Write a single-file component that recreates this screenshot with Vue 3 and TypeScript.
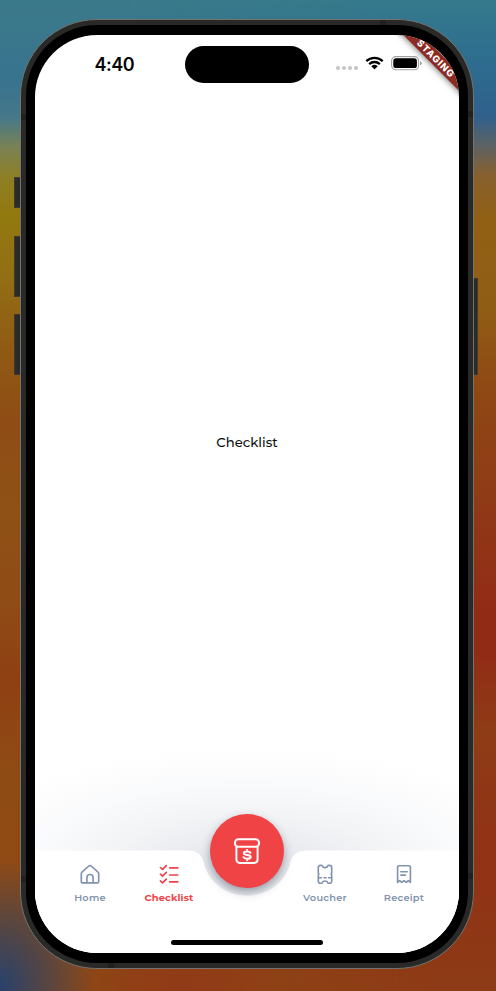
<script setup lang="ts">
interface Tab {
  id: string
  label: string
  paths: string[]
}

const leftTabs: Tab[] = [
  {
    id: 'home',
    label: 'Home',
    paths: ['M2 8.1 8.8 2Q10 1 11.2 2L18 8.1Q18.700 8.700 18.700 9.800V17.700Q18.700 18.900 17.500 18.900H2.500Q1.300 18.900 1.300 17.700V9.800Q1.300 8.700 2 8.100Z', 'M6.9 18.8V13.6A3.1 3.1 0 0 1 13.1 13.6V18.8'],
  },
  {
    id: 'checklist',
    label: 'Checklist',
    paths: ['M1.4 3.5 3.6 5.4 7.3 1.7', 'M1.4 10.2 3.6 12.1 7.3 8.4', 'M1.4 16.9 3.6 18.8 7.3 15.1', 'M10.6 3.8H18.8', 'M10.6 11H18.8', 'M10.6 17.9H18.8'],
  },
]

const rightTabs: Tab[] = [
  {
    id: 'voucher',
    label: 'Voucher',
    paths: ['M7.3 2C8 4.200 12 4.200 12.700 2Q13 1.300 13.800 1.300H14.500Q16.700 1.300 16.700 3.500V9.300Q15.700 10.300 16.700 11.300V17.200Q16.700 19.300 14.500 19.300H13.800Q13 19.300 12.700 18.600C12 16.400 8 16.400 7.300 18.600Q7 19.300 6.200 19.300H5.500Q3.300 19.300 3.300 17.200V11.300Q4.300 10.300 3.300 9.300V3.500Q3.300 1.300 5.500 1.300H6.200Q7 1.300 7.300 2Z', 'M4 13.7H6.4', 'M9 13.7H11', 'M13.600 13.700H16'],
  },
  {
    id: 'receipt',
    label: 'Receipt',
    paths: ['M3.6 18.4V3.1Q3.6 1.7 5 1.7H15Q16.4 1.7 16.4 3.1V18.4L14.3 16.7 12.2 18.4 10 16.7 7.8 18.4 5.7 16.7Z', 'M6.8 7.7H13.2', 'M6.8 11.1H11.4'],
  },
]

const activeTab = 'checklist'
const sideKeys = ['mute', 'up', 'down', 'power']
const seams = ['tl', 'tr', 'bl', 'br', 'top', 'bottom']
</script>

<template>
  <div class="desktop">
    <div class="phone">
      <i v-for="k in sideKeys" :key="k" class="key" :class="k" />
      <i v-for="s in seams" :key="s" class="seam" :class="s" />
      <div class="bezel">
        <div class="screen">
          <header class="status">
            <time class="clock">4:40</time>
            <div class="island" />
            <div class="indicators">
              <svg class="cell" viewBox="0 0 22 4">
                <circle v-for="n in 4" :key="n" :cx="n * 6 - 4" cy="2" r="2" />
              </svg>
              <svg class="wifi" viewBox="0 0 20 14">
                <path d="M1.4 5.1A12.4 12.4 0 0 1 18.6 5.1M4.4 8.2A8.1 8.1 0 0 1 15.6 8.2" />
                <path class="dot" d="M6.6 10.3Q10 7.3 13.4 10.3L10.5 13.2Q10 13.7 9.5 13.2Z" />
              </svg>
              <svg class="battery" viewBox="0 0 31 15">
                <rect class="shell" x=".6" y=".6" width="27" height="13.2" rx="4.2" />
                <rect x="2.3" y="2.3" width="23.6" height="9.8" rx="2.7" />
                <path class="tip" d="M29 5.2Q30.8 5.8 30.8 7.2T29 9.3Z" />
              </svg>
            </div>
          </header>

          <main class="content">Checklist</main>

          <div class="ribbon"><span>STAGING</span></div>

          <footer class="dock">
            <svg class="surface" viewBox="0 0 424 103">
              <path d="M0 -.5H152Q167 -.5 169 13C174 31 191 44.500 212 44.500S250 31 255 13Q257 -.5 272 -.5H424V103H0Z" />
            </svg>
            <nav class="tabs">
              <a v-for="t in leftTabs" :key="t.id" class="tab" :class="[t.id, { active: t.id === activeTab }]">
                <svg viewBox="0 0 20 20"><path v-for="d in t.paths" :key="d" :d="d" /></svg>
                <span>{{ t.label }}</span>
              </a>
              <span class="gap" />
              <a v-for="t in rightTabs" :key="t.id" class="tab" :class="[t.id, { active: t.id === activeTab }]">
                <svg viewBox="0 0 20 20"><path v-for="d in t.paths" :key="d" :d="d" /></svg>
                <span>{{ t.label }}</span>
              </a>
            </nav>
            <button class="fab" aria-label="Payments">
              <svg viewBox="0 0 26 26">
                <rect x="1" y="1.200" width="24" height="7.600" rx="3.400" />
                <path d="M2.400 8.800V21.300Q2.400 24.900 6 24.900H20Q23.600 24.900 23.600 21.300V8.800" />
                <path d="M16.500 14.700Q15.800 13.500 13.200 13.500 9.800 13.500 9.800 15.300C9.800 18 16.700 16 16.700 18.900Q16.700 20.700 13.200 20.700 10.200 20.700 9.500 19.200M13.100 11.900V13.500M13.100 20.700V22.300" />
              </svg>
            </button>
            <div class="grabber" />
          </footer>
        </div>
      </div>
    </div>
  </div>
</template>

<style>
body {
  margin: 0;
  overflow: hidden;
}
</style>

<style scoped>
* {
  box-sizing: border-box;
}
.desktop {
  position: relative;
  isolation: isolate;
  width: 496px;
  height: 991px;
  padding: 19px 22px 22px 20px;
  overflow: hidden;
  background:
    radial-gradient(ellipse 96px 125px at 0 985px, #29426c 0, #30436099 48%, #8f4a1600 100%),
    linear-gradient(180deg, #3b7a8a 0, #38738f 82px, #477889 118px, #7b8252 148px, #8e7f25 178px, #92790f 215px, #927014 270px, #905a14 350px, #8f4d15 420px, #8f5116 510px, #8f4c15 600px, #8f4014 680px, #8f4b14 770px, #8f4815 991px);
}
.desktop::before {
  content: '';
  position: absolute;
  z-index: -1;
  inset: 0;
  background: linear-gradient(180deg, #347a8c 0, #2e6c8f 65px, #2f608c 116px, #5c6265 145px, #87602f 175px, #916014 220px, #905d15 310px, #8f4914 385px, #8f3d16 480px, #922b16 610px, #912b16 650px, #8e3c16 730px, #913215 860px, #8d3b16 991px);
  -webkit-mask-image: linear-gradient(90deg, transparent 80px, #000 440px);
  mask-image: linear-gradient(90deg, transparent 80px, #000 440px);
}
.desktop::after {
  content: '';
  position: absolute;
  z-index: -1;
  inset: 920px 0 0;
  background: radial-gradient(ellipse 100px 70px at 180px 65px, #94321899 0, #94321800 100%);
}
.phone {
  position: relative;
  width: 454px;
  height: 950px;
  padding: 5px;
  border: 1px solid #72736f;
  border-radius: 77px;
  background: #292a28;
}
.bezel {
  height: 100%;
  padding: 10px 9px;
  border-radius: 71px;
  background: #000;
}
.screen {
  position: relative;
  display: flex;
  flex-direction: column;
  height: 918px;
  border-radius: 62px;
  background: #fff;
  overflow: hidden;
}
.key {
  position: absolute;
  left: -7px;
  width: 6px;
  border: 1px solid #41392b;
  border-right: 0;
  background: #2b2c2a;
}
.mute { top: 157px; height: 31px; }
.up { top: 216px; height: 61px; }
.down { top: 294px; height: 61px; }
.power {
  top: 258px;
  left: 453px;
  width: 4px;
  height: 97px;
  border: 1px solid #41392b;
  border-left: 0;
}
.seam {
  position: absolute;
  width: 5px;
  height: 6px;
  background: #20211f;
}
.tl { top: 94px; left: 0; }
.tr { top: 91px; right: 0; }
.bl { top: 856px; left: 0; }
.br { top: 853px; right: 0; }
.top { top: 0; left: 359px; width: 6px; height: 5px; }
.bottom { bottom: 0; left: 87px; width: 6px; height: 5px; }

.status {
  display: grid;
  grid-template-columns: 150px 124px 150px;
  flex: none;
  height: 59px;
}
.clock {
  padding: 19px 0 0 59.500px;
  font: 600 18px/22px Inter, sans-serif;
  letter-spacing: -0.450px;
  color: #050505;
}
.island {
  height: 36.500px;
  margin-top: 11px;
  border-radius: 19px;
  background: #000;
}
.indicators {
  display: flex;
  align-items: flex-start;
  padding: 21px 0 0 27px;
}
.cell {
  width: 22px;
  height: 4px;
  margin: 10px 7px 0 0;
  fill: #c5c5c7;
}
.wifi {
  width: 19px;
  height: 14px;
  margin-right: 7px;
  fill: none;
  stroke: #000;
  stroke-width: 2.400;
}
.wifi .dot {
  fill: #000;
  stroke: none;
}
.battery {
  width: 31px;
  height: 15px;
}
.shell {
  fill: none;
  stroke: #a2a2a2;
  stroke-width: 1.100;
}
.tip { fill: #a2a2a2; }

.content {
  display: flex;
  flex: 1;
  align-items: center;
  justify-content: center;
  padding-bottom: 106px;
  margin-bottom: -45px;
  font: 500 13.200px/18px Montserrat, Inter, sans-serif;
  letter-spacing: 0;
  color: #101010;
}
.ribbon {
  position: absolute;
  top: 17px;
  right: -42px;
  width: 130px;
  height: 13px;
  background: #8d2b23;
  box-shadow: 0 0 7px #000a;
  transform: rotate(45deg);
  font: 800 9.400px/13px Inter, sans-serif;
  letter-spacing: 0.950px;
  text-align: center;
  color: #fff;
}
.dock {
  position: relative;
  flex: none;
  height: 102px;
}
.dock::before {
  content: '';
  position: absolute;
  top: -115px;
  left: 0;
  width: 424px;
  height: 165px;
  background: radial-gradient(ellipse 310px 122px at 212px 132px, #e0e3e8 0, #e9ebef 22%, #f2f4f6 45%, #f9fafb 68%, #fdfdfe 85%, #fff 100%);
}
.surface {
  position: absolute;
  inset: 0;
  width: 424px;
  height: 103px;
  fill: #fff;
  overflow: visible;
}
.tabs {
  position: relative;
  display: grid;
  grid-template-columns: 78px 80px 76px 80px 78px;
  padding: 13px 0 0 16px;
}
.tab {
  display: flex;
  flex-direction: column;
  align-items: center;
  gap: 7px;
  font: 600 9.800px/13px Montserrat, Inter, sans-serif;
  letter-spacing: 0.260px;
  color: #8293ad;
}
.tab svg {
  width: 20px;
  height: 20px;
  fill: none;
  stroke: currentColor;
  stroke-width: 1.650;
  stroke-linecap: round;
  stroke-linejoin: round;
}
.tab.active {
  color: #ef4349;
  font-weight: 700;
  letter-spacing: 0.130px;
}
.fab {
  position: absolute;
  top: -37.500px;
  left: 175px;
  display: grid;
  place-items: center;
  width: 74px;
  height: 74px;
  padding: 0;
  border: 0;
  border-radius: 50%;
  background: #ef4345;
  box-shadow: 0 4px 8px #4b536480;
}
.fab svg {
  width: 26px;
  height: 26px;
  fill: none;
  stroke: #fff;
  stroke-width: 2;
  stroke-linecap: round;
  stroke-linejoin: round;
}
.grabber {
  position: absolute;
  bottom: 8px;
  left: 136px;
  width: 152px;
  height: 5px;
  border-radius: 3px;
  background: #000;
}
</style>
